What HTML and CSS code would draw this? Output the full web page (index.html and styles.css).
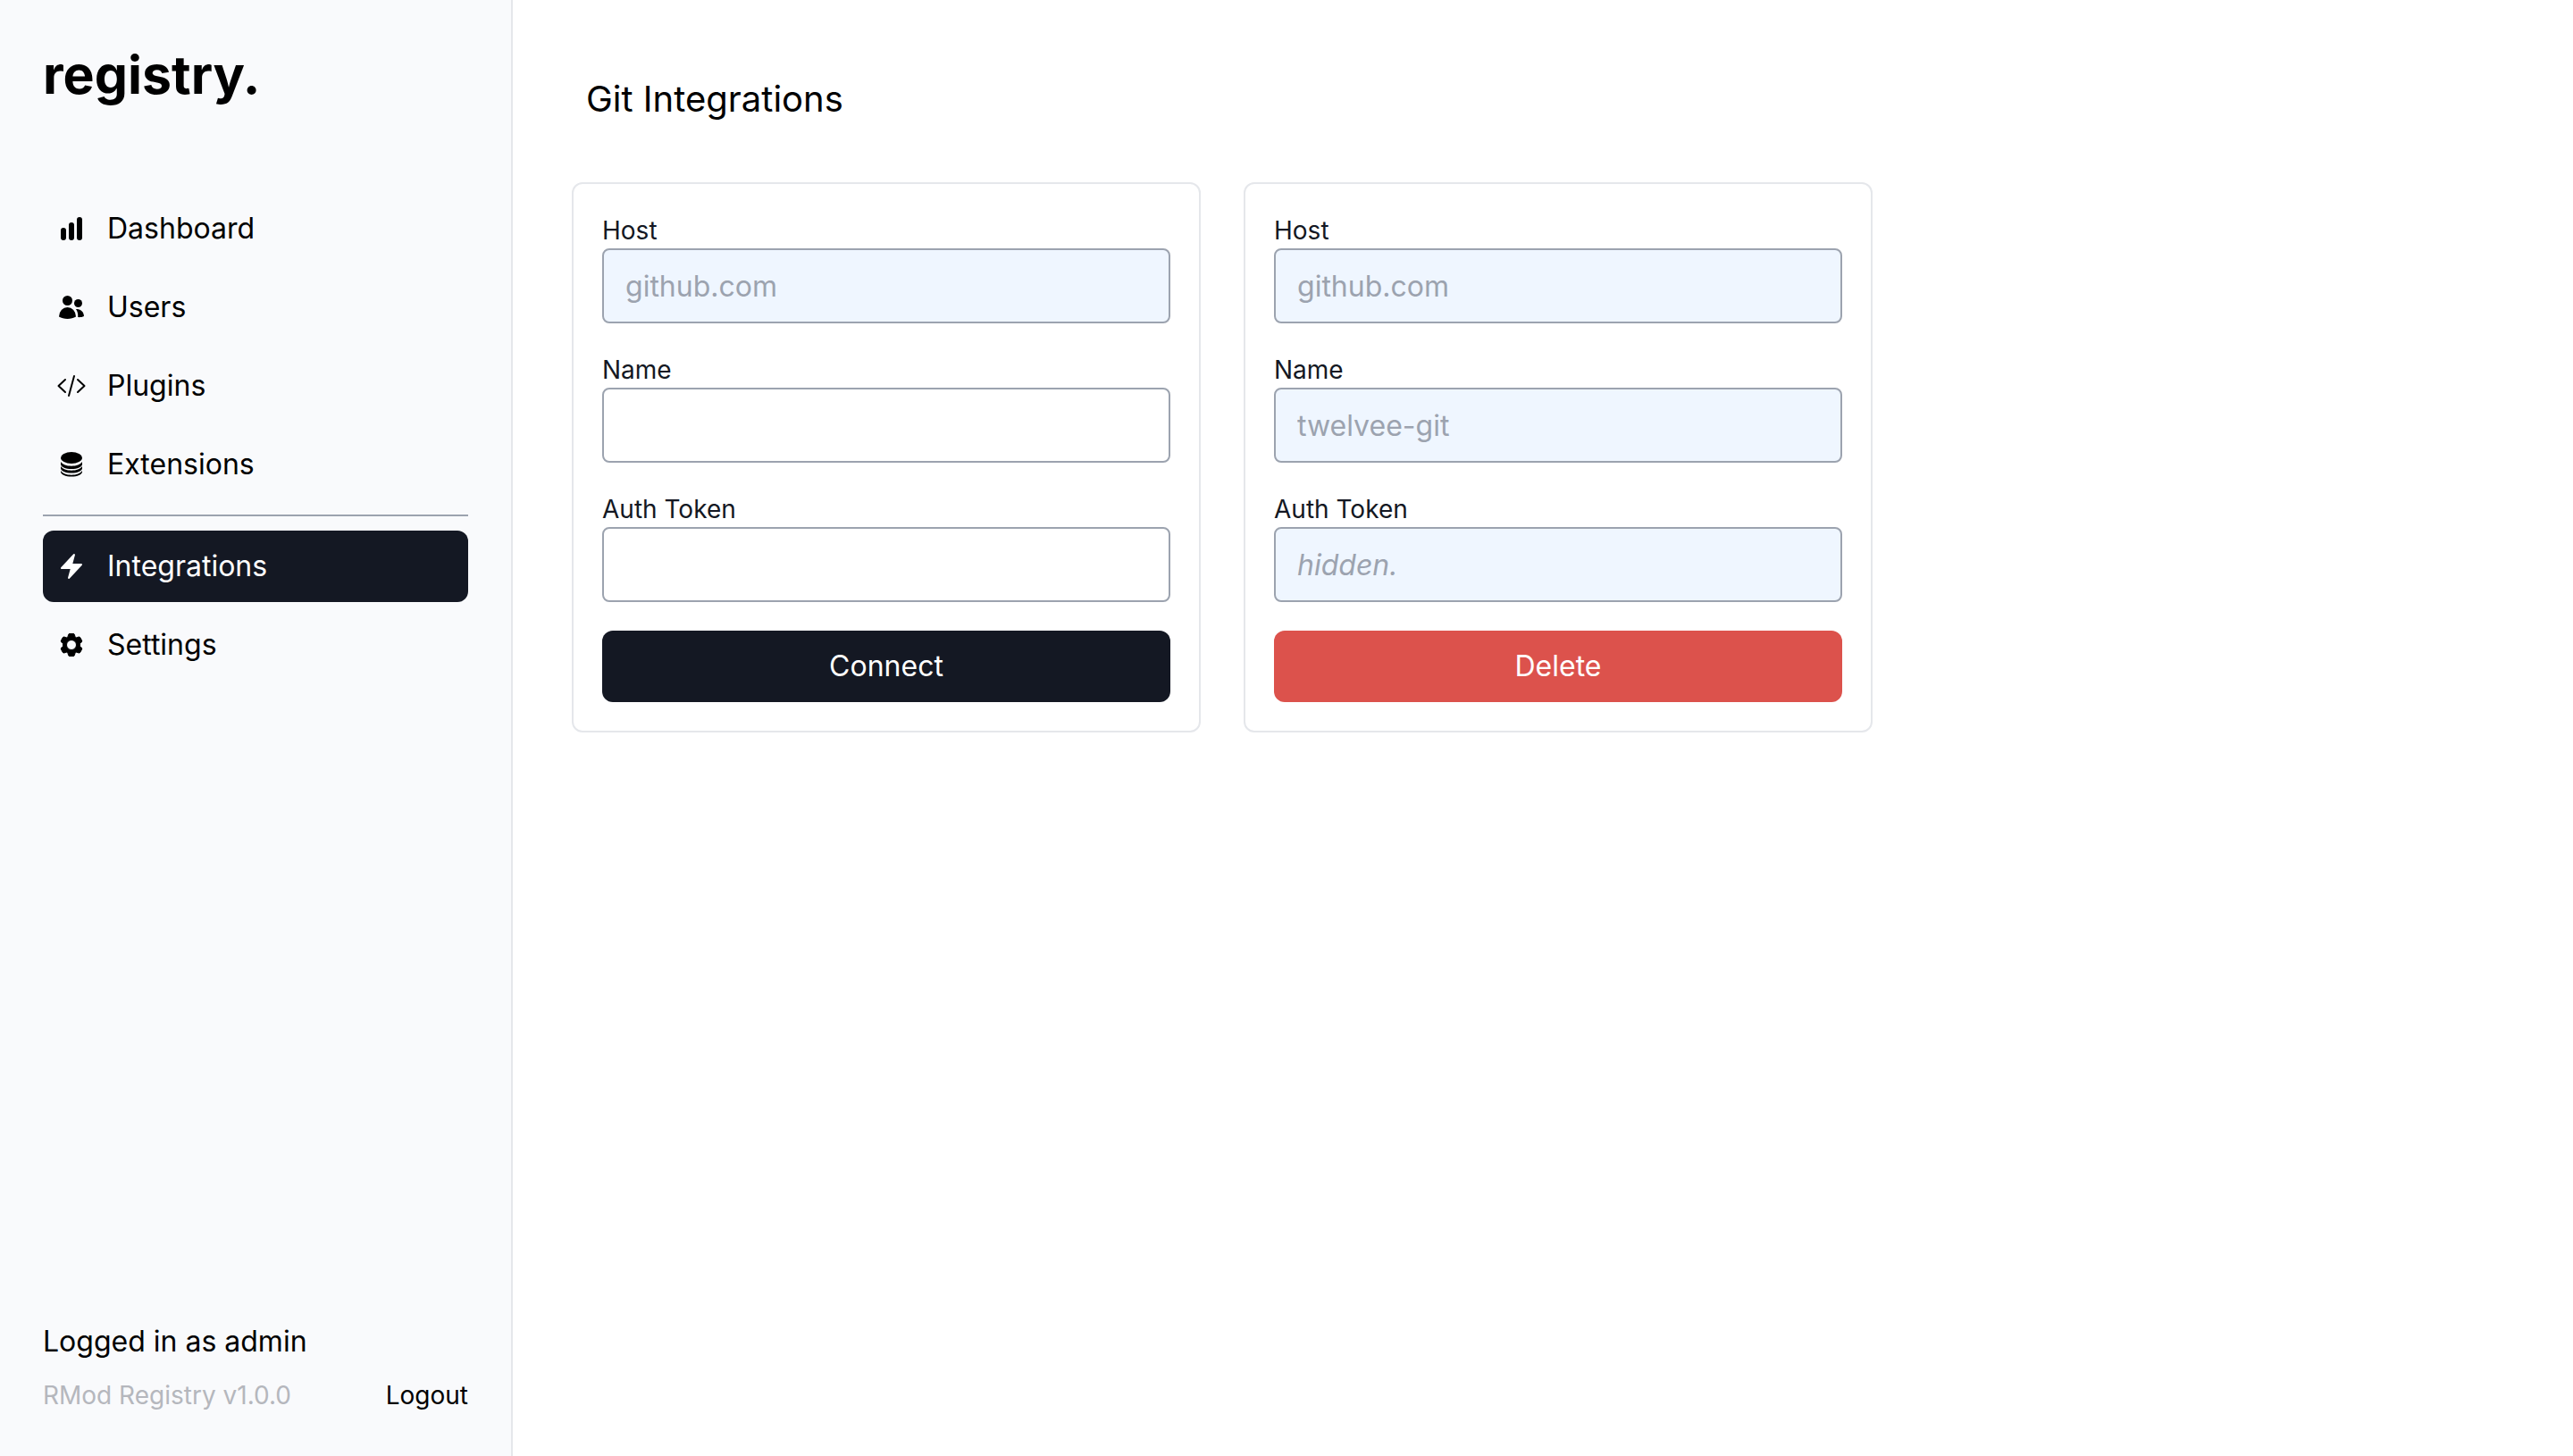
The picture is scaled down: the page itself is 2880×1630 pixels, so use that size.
FILE: index.html
```html
<!DOCTYPE html>
<html lang="en">
<head>
<meta charset="utf-8">
<meta name="viewport" content="width=device-width, initial-scale=1">
<title>registry.</title>
<link rel="stylesheet" href="styles.css">
</head>
<body>
<div class="layout">
  <aside class="sidebar">
    <h1 class="logo">registry.</h1>
    <nav class="nav">
      <a class="nav-item" href="#dashboard">
        <svg class="icon" viewBox="0 0 32 32" aria-hidden="true"><rect x="4" y="15" width="6" height="14" rx="3"/><rect x="13" y="9" width="6" height="20" rx="3"/><rect x="22" y="3" width="6" height="26" rx="3"/></svg>
        Dashboard
      </a>
      <a class="nav-item" href="#users">
        <svg class="icon" viewBox="0 0 32 32" aria-hidden="true"><circle cx="11.500" cy="8.500" r="5.500"/><circle cx="23.500" cy="11.500" r="4.500"/><path d="M2 26.500a9.500 10.500 0 0 1 19 0c-5 3.300-14 3.300-19 0z"/><path d="M21 18c5-.8 9 3.200 9 8-2 1-4.500 1.300-6.800 1.100C23.500 23.500 22.800 20.500 21 18z"/></svg>
        Users
      </a>
      <a class="nav-item" href="#plugins">
        <svg class="icon icon-line" viewBox="0 0 32 32" aria-hidden="true"><path d="M9 9l-7.500 7L9 23M23 9l7.500 7L23 23M19 5l-6 22"/></svg>
        Plugins
      </a>
      <a class="nav-item" href="#extensions">
        <svg class="icon" viewBox="0 0 32 32" aria-hidden="true"><ellipse cx="16" cy="8.500" rx="12" ry="6.500"/><path d="M4 12.500c2 3 6.500 4.700 12 4.700s10-1.700 12-4.700v2.800c0 2.900-5.500 5.300-12 5.300S4 18.200 4 15.300z" transform="translate(0 .5)"/><path d="M4 12.500c2 3 6.500 4.700 12 4.700s10-1.700 12-4.700v2.200c0 2.900-5.500 5.300-12 5.300S4 17.600 4 14.700z" transform="translate(0 5.500)"/><path d="M4 12.500c2 3 6.500 4.700 12 4.700s10-1.700 12-4.700v1.200c0 2.900-5.500 5.300-12 5.300S4 16.600 4 13.700z" transform="translate(0 10.500)"/></svg>
        Extensions
      </a>
      <hr class="divider">
      <a class="nav-item active" href="#integrations" aria-current="page">
        <svg class="icon" viewBox="0 0 24 24" aria-hidden="true"><path d="M14.615 1.595a.75.75 0 0 1 .359.852L12.982 9.750h7.268a.75.75 0 0 1 .548 1.262l-10.500 11.250a.75.75 0 0 1-1.272-.71l1.992-7.302H3.750a.75.75 0 0 1-.548-1.262l10.500-11.250a.75.75 0 0 1 .913-.143z"/></svg>
        Integrations
      </a>
      <a class="nav-item" href="#settings">
        <svg class="icon" viewBox="0 0 32 32" aria-hidden="true"><path stroke="currentColor" stroke-width="1" stroke-linejoin="round" fill-rule="evenodd" d="M14 3.500h4a1.500 1.500 0 0 1 1.500 1.200l.4 2.200 1.800 1 2.300-.8a1.500 1.500 0 0 1 1.800.7l1.700 3.200a1.500 1.500 0 0 1-.3 1.900L25.500 14.600v2.800l1.700 1.700a1.500 1.500 0 0 1 .3 1.900l-1.700 3.200a1.500 1.500 0 0 1-1.800.7l-2.300-.8-1.800 1-.4 2.200a1.500 1.500 0 0 1-1.500 1.200h-4a1.500 1.500 0 0 1-1.500-1.200l-.4-2.200-1.800-1-2.300.8a1.500 1.500 0 0 1-1.800-.7l-1.700-3.200a1.500 1.500 0 0 1 .3-1.900l1.700-1.700v-2.800l-1.700-1.700a1.500 1.500 0 0 1-.3-1.900l1.700-3.200a1.500 1.500 0 0 1 1.800-.7l2.300.8 1.800-1 .4-2.200A1.500 1.500 0 0 1 14 3.500zM16 10.500a5.500 5.500 0 1 0 0 11 5.500 5.500 0 0 0 0-11z"/></svg>
        Settings
      </a>
    </nav>
    <footer class="account">
      <p class="account-user">Logged in as admin</p>
      <div class="account-row">
        <span class="version">RMod Registry v1.0.0</span>
        <a class="logout" href="#logout">Logout</a>
      </div>
    </footer>
  </aside>

  <main class="main">
    <h2 class="title">Git Integrations</h2>
    <div class="cards">
      <form class="card">
        <div class="field">
          <label class="label" for="new-host">Host</label>
          <input class="input" id="new-host" type="text" placeholder="github.com" disabled>
        </div>
        <div class="field">
          <label class="label" for="new-name">Name</label>
          <input class="input" id="new-name" type="text">
        </div>
        <div class="field">
          <label class="label" for="new-token">Auth Token</label>
          <input class="input" id="new-token" type="text">
        </div>
        <button class="button" type="button">Connect</button>
      </form>
      <form class="card">
        <div class="field">
          <label class="label" for="git-host">Host</label>
          <input class="input" id="git-host" type="text" placeholder="github.com" disabled>
        </div>
        <div class="field">
          <label class="label" for="git-name">Name</label>
          <input class="input" id="git-name" type="text" placeholder="twelvee-git" disabled>
        </div>
        <div class="field">
          <label class="label" for="git-token">Auth Token</label>
          <input class="input input-hidden" id="git-token" type="text" placeholder="hidden." disabled>
        </div>
        <button class="button button-danger" type="button">Delete</button>
      </form>
    </div>
  </main>
</div>
</body>
</html>
```
FILE: styles.css
```css
*,
*::before,
*::after {
  box-sizing: border-box;
}

body {
  margin: 0;
  background: #fff;
  color: #000;
  font-family: Inter, "Liberation Sans", sans-serif;
  font-size: 32px;
  line-height: 48px;
}

h1, h2, p {
  margin: 0;
}

a {
  color: inherit;
  text-decoration: none;
}

.layout {
  display: flex;
  min-height: 100vh;
}

.sidebar {
  display: flex;
  flex-direction: column;
  flex: none;
  width: 574px;
  padding: 48px;
  background: #f9fafc;
  border-right: 2px solid #e5e7eb;
}

.logo {
  font-size: 59px;
  font-weight: 700;
  line-height: 72px;
}

.nav {
  display: flex;
  flex-direction: column;
  gap: 8px;
  margin-top: 96px;
}

.nav-item {
  display: flex;
  align-items: center;
  gap: 24px;
  padding: 16px;
  border-radius: 12px;
}

.active {
  background: #141823;
  color: #fff;
}

.icon {
  width: 32px;
  height: 32px;
  fill: currentColor;
}

.icon-line {
  fill: none;
  stroke: currentColor;
  stroke-width: 2;
  stroke-linecap: round;
  stroke-linejoin: round;
}

.divider {
  width: 100%;
  margin: 8px 0;
  border: 0;
  border-top: 2px solid #9ca3af;
}

.account {
  display: flex;
  flex-direction: column;
  gap: 16px;
  margin-top: auto;
}

.account-row {
  display: flex;
  justify-content: space-between;
  font-size: 28px;
  line-height: 40px;
}

.version {
  color: #b5b7bd;
}

.main {
  flex: 1;
  padding: 82px 32px 48px 66px;
}

.title {
  padding: 0 16px;
  font-size: 40px;
  font-weight: 400;
  line-height: 58px;
}

.cards {
  display: grid;
  grid-template-columns: repeat(3, minmax(0, 1fr));
  gap: 48px;
  margin-top: 64px;
}

.card {
  display: flex;
  flex-direction: column;
  gap: 32px;
  padding: 32px;
  border: 2px solid #e5e7eb;
  border-radius: 12px;
}

.field {
  display: flex;
  flex-direction: column;
}

.label {
  color: #141823;
  font-size: 28px;
  line-height: 40px;
}

.input {
  width: 100%;
  height: 84px;
  padding: 16px 24px;
  border: 2px solid #9ca3af;
  border-radius: 8px;
  background: #fff;
  color: #141823;
  font: inherit;
}

.input:disabled {
  background: #eff6ff;
}

.input::placeholder {
  color: #9ca3af;
  opacity: 1;
}

.input-hidden {
  font-style: italic;
}

.button {
  padding: 16px;
  border: 0;
  border-radius: 12px;
  background: #141823;
  color: #fff;
  font: inherit;
}

.button-danger {
  background: #dc524c;
}
```
